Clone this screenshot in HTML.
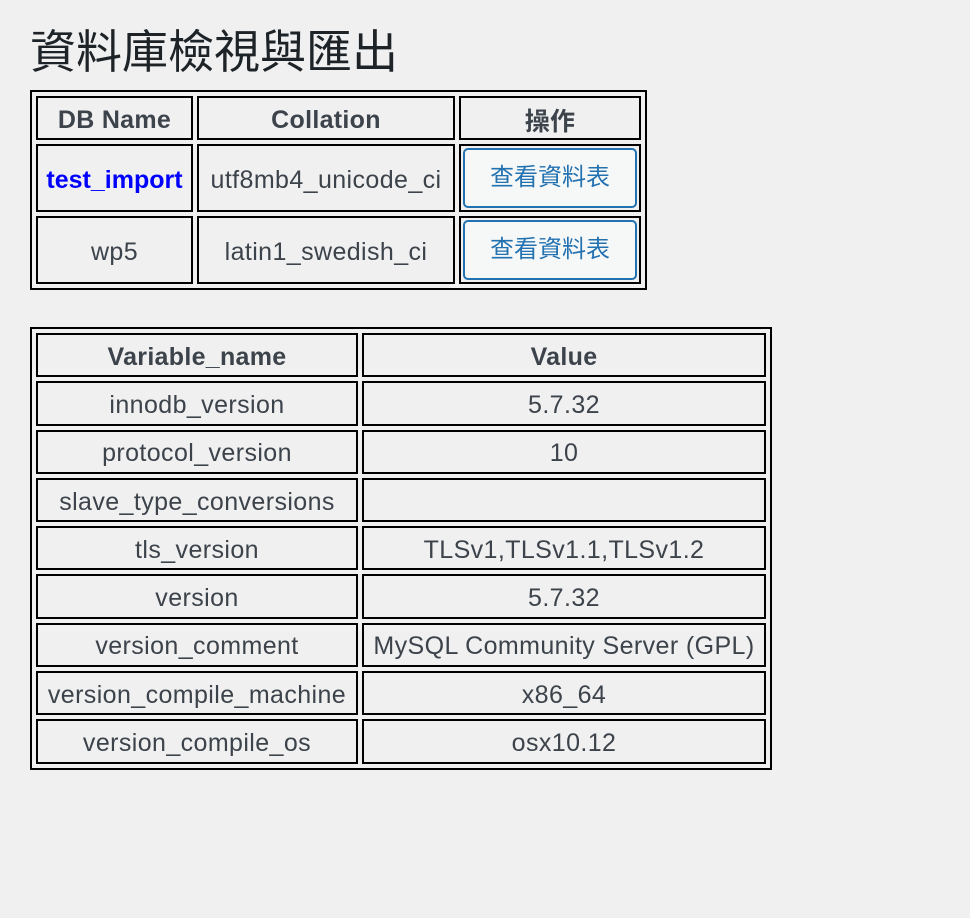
<!DOCTYPE html>
<html><head><meta charset="utf-8"><style>
body{margin:0;background:#f0f0f1;color:#3c434a;font-family:"Liberation Sans","Noto Sans CJK TC",sans-serif;}
h1{position:absolute;left:30px;top:24px;margin:0;font-size:46px;font-weight:400;line-height:56px;color:#1d2327;letter-spacing:0;}
table{position:absolute;border:2px solid #000;border-spacing:4px;border-collapse:separate;}
td,th{border:2px solid #000;padding:4px 0 0 0;text-align:center;font-size:25px;letter-spacing:0.4px;height:36px;white-space:nowrap;overflow:hidden;}
th{font-weight:700;letter-spacing:0.3px;}
#t1{left:30px;top:90px;}
#t1 tr.r td{height:60px;}
a{color:#0000ff;font-weight:700;text-decoration:none;letter-spacing:0;}
.btn{display:inline-block;box-sizing:border-box;width:174px;height:60px;line-height:56px;border:2px solid #2271b1;border-radius:5px;color:#2271b1;background:#f6f7f7;font-size:24px;letter-spacing:0;vertical-align:middle;margin-top:-4px;}
#t2{left:30px;top:327px;}
#t2 td,#t2 th{height:36.3px;}
</style></head><body>
<h1>資料庫檢視與匯出</h1>
<table id="t1">
<tr><th style="width:153px">DB Name</th><th style="width:254px">Collation</th><th style="width:178px">操作</th></tr>
<tr class="r"><td><a>test_import</a></td><td>utf8mb4_unicode_ci</td><td><span class="btn">查看資料表</span></td></tr>
<tr class="r"><td>wp5</td><td>latin1_swedish_ci</td><td><span class="btn">查看資料表</span></td></tr>
</table>
<table id="t2">
<tr><th style="width:318px">Variable_name</th><th style="width:400px">Value</th></tr>
<tr><td>innodb_version</td><td>5.7.32</td></tr>
<tr><td>protocol_version</td><td>10</td></tr>
<tr><td>slave_type_conversions</td><td></td></tr>
<tr><td>tls_version</td><td>TLSv1,TLSv1.1,TLSv1.2</td></tr>
<tr><td>version</td><td>5.7.32</td></tr>
<tr><td>version_comment</td><td>MySQL Community Server (GPL)</td></tr>
<tr><td>version_compile_machine</td><td>x86_64</td></tr>
<tr><td>version_compile_os</td><td>osx10.12</td></tr>
</table>
</body></html>
